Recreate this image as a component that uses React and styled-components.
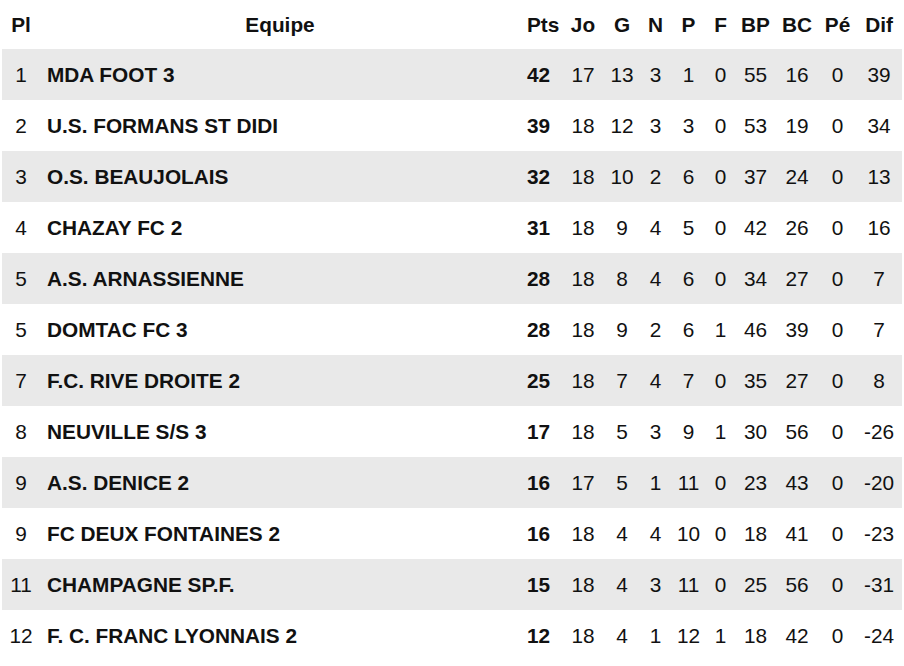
import React from "react";
import styled, { createGlobalStyle } from "styled-components";

const GlobalStyle = createGlobalStyle`
  html, body {
    margin: 0;
    padding: 0;
    background: #fff;
  }
  body {
    font-family: "Liberation Sans", Arial, sans-serif;
    color: #111;
  }
`;

const Wrapper = styled.div`
  padding: 0 2px;
`;

const Table = styled.table`
  width: 900px;
  border-collapse: collapse;
  table-layout: fixed;
  font-size: 20.8px;
`;

const HeadRow = styled.tr`
  height: 49px;
`;

const HeadCell = styled.th`
  box-sizing: border-box;
  padding: 0;
  font-weight: 700;
  text-align: ${(p) => p.$align || "center"};
  padding-left: ${(p) => (p.$align === "left" ? "7px" : "0")};
  width: ${(p) => p.$w}px;
  vertical-align: middle;
`;

const Row = styled.tr`
  height: 51px;
  background: ${(p) => (p.$striped ? "#e9e9e9" : "#fff")};
`;

const Cell = styled.td`
  box-sizing: border-box;
  padding: 0;
  text-align: ${(p) => p.$align || "center"};
  padding-left: ${(p) => (p.$align === "left" ? "7px" : "0")};
  font-weight: ${(p) => (p.$bold ? 700 : 400)};
  vertical-align: middle;
  white-space: nowrap;
`;

const columns = [
  { key: "pl", label: "Pl", w: 38 },
  { key: "team", label: "Equipe", w: 480 },
  { key: "pts", label: "Pts", w: 41, align: "left" },
  { key: "jo", label: "Jo", w: 44 },
  { key: "g", label: "G", w: 34 },
  { key: "n", label: "N", w: 33 },
  { key: "p", label: "P", w: 33 },
  { key: "f", label: "F", w: 31 },
  { key: "bp", label: "BP", w: 39 },
  { key: "bc", label: "BC", w: 44 },
  { key: "pe", label: "Pé", w: 37 },
  { key: "dif", label: "Dif", w: 46 },
];

const standings = [
  [1, "MDA FOOT 3", 42, 17, 13, 3, 1, 0, 55, 16, 0, 39],
  [2, "U.S. FORMANS ST DIDI", 39, 18, 12, 3, 3, 0, 53, 19, 0, 34],
  [3, "O.S. BEAUJOLAIS", 32, 18, 10, 2, 6, 0, 37, 24, 0, 13],
  [4, "CHAZAY FC 2", 31, 18, 9, 4, 5, 0, 42, 26, 0, 16],
  [5, "A.S. ARNASSIENNE", 28, 18, 8, 4, 6, 0, 34, 27, 0, 7],
  [5, "DOMTAC FC 3", 28, 18, 9, 2, 6, 1, 46, 39, 0, 7],
  [7, "F.C. RIVE DROITE 2", 25, 18, 7, 4, 7, 0, 35, 27, 0, 8],
  [8, "NEUVILLE S/S 3", 17, 18, 5, 3, 9, 1, 30, 56, 0, -26],
  [9, "A.S. DENICE 2", 16, 17, 5, 1, 11, 0, 23, 43, 0, -20],
  [9, "FC DEUX FONTAINES 2", 16, 18, 4, 4, 10, 0, 18, 41, 0, -23],
  [11, "CHAMPAGNE SP.F.", 15, 18, 4, 3, 11, 0, 25, 56, 0, -31],
  [12, "F. C. FRANC LYONNAIS 2", 12, 18, 4, 1, 12, 1, 18, 42, 0, -24],
];

export default function App() {
  return (
    <>
      <GlobalStyle />
      <Wrapper>
        <Table>
          <thead>
            <HeadRow>
              {columns.map((c) => (
                <HeadCell key={c.key} $w={c.w} $align={c.align}>
                  {c.label}
                </HeadCell>
              ))}
            </HeadRow>
          </thead>
          <tbody>
            {standings.map((row, i) => (
              <Row key={i} $striped={i % 2 === 0}>
                {row.map((v, j) => (
                  <Cell
                    key={j}
                    $align={j === 1 || j === 2 ? "left" : undefined}
                    $bold={j === 1 || j === 2}
                  >
                    {v}
                  </Cell>
                ))}
              </Row>
            ))}
          </tbody>
        </Table>
      </Wrapper>
    </>
  );
}
